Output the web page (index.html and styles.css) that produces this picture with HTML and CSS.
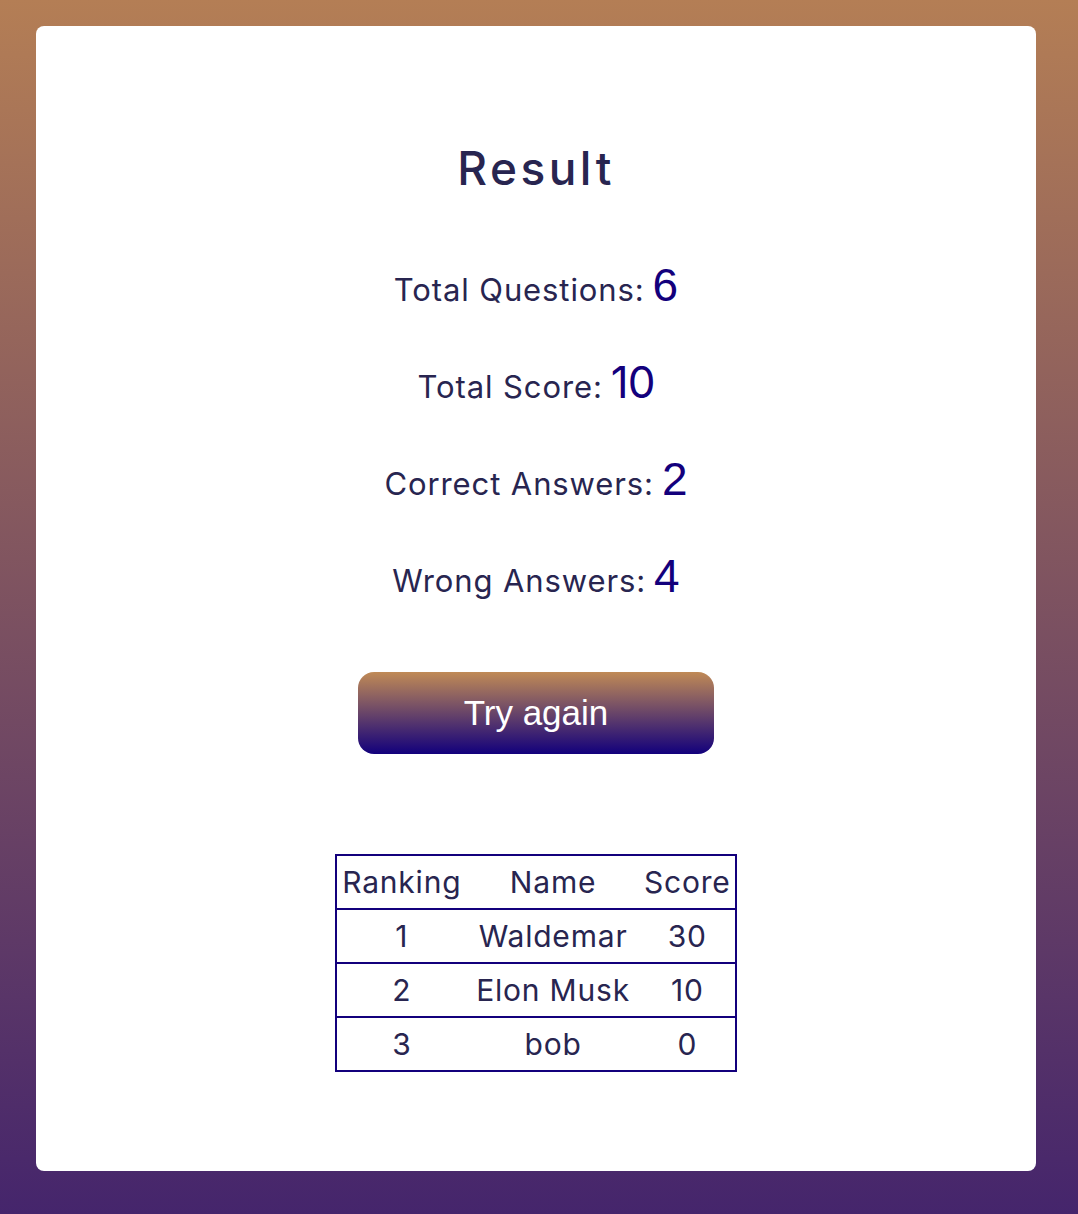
FILE: index.html
```html
<!DOCTYPE html>
<html lang="en">
<head>
<meta charset="utf-8">
<title>Result</title>
<link rel="stylesheet" href="styles.css">
</head>
<body>
<main class="card">
  <h1 class="title">Result</h1>
  <div class="stats">
    <div class="stat"><span class="label">Total Questions:</span><span class="value">6</span></div>
    <div class="stat"><span class="label">Total Score:</span><span class="value value-alt">10</span></div>
    <div class="stat"><span class="label">Correct Answers:</span><span class="value">2</span></div>
    <div class="stat"><span class="label">Wrong Answers:</span><span class="value">4</span></div>
  </div>
  <button class="btn" type="button">Try again</button>
  <table class="ranking">
    <colgroup><col class="c1"><col class="c2"><col class="c3"></colgroup>
    <thead>
      <tr><th>Ranking</th><th>Name</th><th>Score</th></tr>
    </thead>
    <tbody>
      <tr><td>1</td><td>Waldemar</td><td>30</td></tr>
      <tr><td>2</td><td>Elon Musk</td><td>10</td></tr>
      <tr><td>3</td><td>bob</td><td>0</td></tr>
    </tbody>
  </table>
</main>
</body>
</html>
```

FILE: styles.css
```css
html, body {
  margin: 0;
  padding: 0;
}
body {
  min-height: 1214px;
  box-sizing: border-box;
  padding: 26px 42px 43px 36px;
  background: linear-gradient(to bottom, #b47e55 0%, #45256c 100%);
  font-family: Inter, "Open Sans", sans-serif;
  color: #282550;
}
.card {
  background: #fff;
  border-radius: 8px;
  height: 1145px;
  box-sizing: border-box;
  padding-top: 113px;
  display: flex;
  flex-direction: column;
  align-items: center;
}
.title {
  margin: 0;
  font-size: 46px;
  line-height: 58px;
  font-weight: 500;
  letter-spacing: 3.5px;
  color: #282550;
}
.stats {
  margin-top: 60px;
  display: flex;
  flex-direction: column;
  gap: 41px;
  align-items: center;
}
.stat {
  height: 56px;
  line-height: 56px;
  display: flex;
  align-items: baseline;
  gap: 8px;
}
.label {
  font-size: 31px;
  letter-spacing: 0.9px;
}
.value {
  font-family: "Liberation Sans", Arial, sans-serif;
  font-size: 46px;
  color: #13007c;
}
.value-alt {
  font-family: Inter, sans-serif;
  font-size: 44px;
  letter-spacing: -1px;
}
.btn {
  margin-top: 68px;
  width: 356px;
  height: 82px;
  border: none;
  border-radius: 16px;
  background: linear-gradient(to bottom, #c08a56 0%, #12007c 100%);
  color: #fff;
  font-family: "Liberation Sans", Arial, sans-serif;
  font-size: 35px;
  padding: 0;
}
.ranking {
  margin-top: 100px;
  border-collapse: collapse;
  table-layout: fixed;
  width: 402px;
  border: 2px solid #13007c;
  font-size: 30px;
  letter-spacing: 0.8px;
}
.c1 { width: 130px; }
.c2 { width: 172px; }
.c3 { width: 96px; }
.ranking th,
.ranking td {
  height: 52px;
  padding: 0;
  text-align: center;
  font-weight: 400;
  white-space: nowrap;
  border-bottom: 2px solid #13007c;
}
```
